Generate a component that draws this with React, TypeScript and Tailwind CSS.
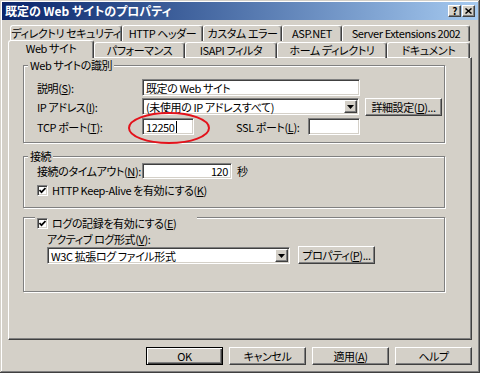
import type { ReactNode } from 'react'

const raised =
  'border border-t-white border-l-white border-r-[#404040] border-b-[#404040] shadow-[inset_-1px_-1px_0_#808080] bg-[#D4D0C8]'
const sunken =
  'border border-t-[#808080] border-l-[#808080] border-r-white border-b-white shadow-[inset_1px_1px_0_#404040,inset_-1px_-1px_0_#D4D0C8] bg-white'

function Tab({ label, w, selected }: { label: string; w: string; selected?: boolean }) {
  if (selected) {
    return (
      <div
        className={`relative z-10 -ml-[2px] flex h-[18px] items-center justify-center rounded-t-[3px] border-l border-t border-r border-l-white border-t-white border-r-[#404040] bg-[#D4D0C8] pb-[3px] shadow-[inset_-1px_0_0_#808080] ${w}`}
      >
        {label}
      </div>
    )
  }
  return (
    <div
      className={`flex h-[16px] items-center justify-center rounded-t-[3px] border-l border-t border-r border-l-white border-t-white border-r-[#404040] pb-[1px] shadow-[inset_-1px_0_0_#808080] ${w}`}
    >
      {label}
    </div>
  )
}

function Btn({ children, w, h, def }: { children: ReactNode; w: string; h: string; def?: boolean }) {
  return (
    <div
      className={
        def
          ? `flex items-center justify-center border border-black bg-[#D4D0C8] shadow-[inset_1px_1px_0_#fff,inset_-1px_-1px_0_#404040,inset_-2px_-2px_0_#808080] ${w} ${h}`
          : `flex items-center justify-center ${raised} ${w} ${h}`
      }
    >
      {children}
    </div>
  )
}

function Arrow() {
  return (
    <svg width="7" height="4" viewBox="0 0 7 4">
      <path d="M0 0h7L3.5 4z" fill="#000" />
    </svg>
  )
}

function Select({ text, w }: { text: string; w: string }) {
  return (
    <div className={`flex h-[17px] items-stretch p-[1px] ${sunken} ${w}`}>
      <div className="flex flex-1 items-center pl-[2px]">{text}</div>
      <div className={`flex w-[13px] items-center justify-center ${raised}`}>
        <Arrow />
      </div>
    </div>
  )
}

function Check() {
  return (
    <div className={`flex h-[11px] w-[11px] shrink-0 items-center justify-center ${sunken}`}>
      <svg width="7" height="7" viewBox="0 0 7 7">
        <polyline points="0.5,3 2.5,5.2 6.5,1" fill="none" stroke="#000" strokeWidth="1.7" />
      </svg>
    </div>
  )
}

function Group({ children, h, cls }: { children: ReactNode; h: string; cls?: string }) {
  return (
    <div
      className={`relative w-[422px] border border-[#808080] shadow-[1px_1px_0_#fff,inset_1px_1px_0_#fff] ${h} ${cls ?? ''}`}
    >
      {children}
    </div>
  )
}

export default function App() {
  return (
    <div className="relative h-[373px] w-[480px] overflow-hidden whitespace-nowrap bg-[#D4D0C8] font-['Noto_Sans_CJK_JP',sans-serif] text-[11px] leading-[14px] tracking-[-0.4px] text-black [font-feature-settings:'palt'] shadow-[inset_-1px_-1px_0_#404040,inset_1px_1px_0_#D4D0C8,inset_-2px_-2px_0_#808080,inset_2px_2px_0_#fff]">
      {/* title bar */}
      <div className="mx-[2px] mt-[2px] flex h-[18px] items-center bg-gradient-to-r from-[#0A246A] to-[#A6CAF0] pl-[3px] pr-[3px]">
        <span className="text-[12px] font-bold tracking-normal text-white">既定の Web サイトのプロパティ</span>
        <div className="ml-auto flex gap-[1px]">
          <div className={`flex h-[12px] w-[13px] items-center justify-center text-[10px] font-bold leading-none ${raised}`}>?</div>
          <div className={`flex h-[12px] w-[13px] items-center justify-center ${raised}`}>
            <svg width="7" height="6" viewBox="0 0 7 6">
              <path d="M0.5 0.5L6.5 5.5M6.5 0.5L0.5 5.5" stroke="#000" strokeWidth="1.5" />
            </svg>
          </div>
        </div>
      </div>

      {/* tabs */}
      <div className="mt-[5px]">
        <div className="ml-[10px] flex h-[17px]">
          <Tab label="ディレクトリ セキュリティ" w="w-[112px]" />
          <Tab label="HTTP ヘッダー" w="w-[81px]" />
          <Tab label="カスタム エラー" w="w-[79px]" />
          <Tab label="ASP.NET" w="w-[60px]" />
          <Tab label="Server Extensions 2002" w="w-[128px]" />
        </div>
        <div className="relative z-10 -mb-px ml-[10px] flex h-[16px] items-end">
          <Tab label="Web サイト" w="w-[86px]" selected />
          <Tab label="パフォーマンス" w="w-[91px]" />
          <Tab label="ISAPI フィルタ" w="w-[92px]" />
          <Tab label="ホーム ディレクトリ" w="w-[110px]" />
          <Tab label="ドキュメント" w="w-[83px]" />
        </div>
      </div>

      {/* panel */}
      <div className="relative z-0 mx-[8px] h-[283px] border-b border-l border-r border-t border-b-[#404040] border-l-white border-r-[#404040] border-t-white pl-[14px] pt-[7px] shadow-[inset_-1px_-1px_0_#808080]">
        <Group h="h-[78px]" cls="pl-[13px] pt-[13px]">
          <span className="absolute -top-[8px] left-[4px] bg-[#D4D0C8] px-[2px]">Web サイトの識別</span>
          <div className="flex h-[17px] items-center">
            <span className="w-[105px]">
              説明(<u>S</u>):
            </span>
            <div className={`flex h-[17px] w-[218px] items-center pl-[3px] ${sunken}`}>既定の Web サイト</div>
          </div>
          <div className="mt-[2px] flex h-[17px] items-center">
            <span className="w-[105px]">
              IP アドレス(<u>I</u>):
            </span>
            <Select text="(未使用の IP アドレスすべて)" w="w-[217px]" />
            <div className="ml-[6px]">
              <Btn w="w-[77px]" h="h-[18px]">
                詳細設定(<u>D</u>)...
              </Btn>
            </div>
          </div>
          <div className="mt-[3px] flex h-[17px] items-center">
            <span className="w-[105px]">
              TCP ポート(<u>T</u>):
            </span>
            <div className={`flex h-[17px] w-[52px] items-center pl-[3px] ${sunken}`}>
              12250
              <span className="ml-[1px] inline-block h-[12px] w-[1px] bg-black" />
            </div>
            <span className="ml-[42px] w-[72px]">
              SSL ポート(<u>L</u>):
            </span>
            <div className={`h-[17px] w-[52px] ${sunken}`} />
          </div>
        </Group>

        <Group h="h-[52px]" cls="mt-[13px] pl-[13px] pt-[6px]">
          <span className="absolute -top-[8px] left-[4px] bg-[#D4D0C8] px-[2px]">接続</span>
          <div className="flex h-[16px] items-center">
            <span className="w-[105px]">
              接続のタイムアウト(<u>N</u>):
            </span>
            <div className={`flex h-[16px] w-[90px] items-center justify-end pr-[3px] ${sunken}`}>120</div>
            <span className="ml-[5px]">秒</span>
          </div>
          <div className="mt-[4px] flex h-[14px] items-center">
            <Check />
            <span className="ml-[4px]">
              HTTP Keep-Alive を有効にする(<u>K</u>)
            </span>
          </div>
        </Group>

        <Group h="h-[75px]" cls="mt-[9px] pl-[23px] pt-[14px]">
          <div className="absolute -top-[5px] left-[11px] flex h-[20px] w-[162px] items-center bg-[#D4D0C8] pl-[2px]">
            <Check />
            <span className="ml-[4px]">
              ログの記録を有効にする(<u>E</u>)
            </span>
          </div>
          <div className="h-[14px]">
            アクティブ ログ形式(<u>V</u>):
          </div>
          <div className="flex items-end">
            <Select text="W3C 拡張ログ ファイル形式" w="w-[243px]" />
            <div className="ml-[8px]">
              <Btn w="w-[77px]" h="h-[18px]">
                プロパティ(<u>P</u>)...
              </Btn>
            </div>
          </div>
        </Group>
      </div>

      {/* buttons */}
      <div className="mt-[7px] flex justify-end gap-[6px] pr-[8px]">
        <Btn w="w-[77px]" h="h-[18px]" def>
          OK
        </Btn>
        <Btn w="w-[77px]" h="h-[18px]">
          キャンセル
        </Btn>
        <Btn w="w-[77px]" h="h-[18px]">
          適用(<u>A</u>)
        </Btn>
        <Btn w="w-[77px]" h="h-[18px]">
          ヘルプ
        </Btn>
      </div>

      {/* annotation */}
      <svg className="absolute left-[128px] top-[112px]" width="84" height="33" viewBox="0 0 84 33">
        <ellipse cx="41" cy="16" rx="40" ry="15" fill="none" stroke="#E3121B" strokeWidth="2" />
      </svg>
    </div>
  )
}
